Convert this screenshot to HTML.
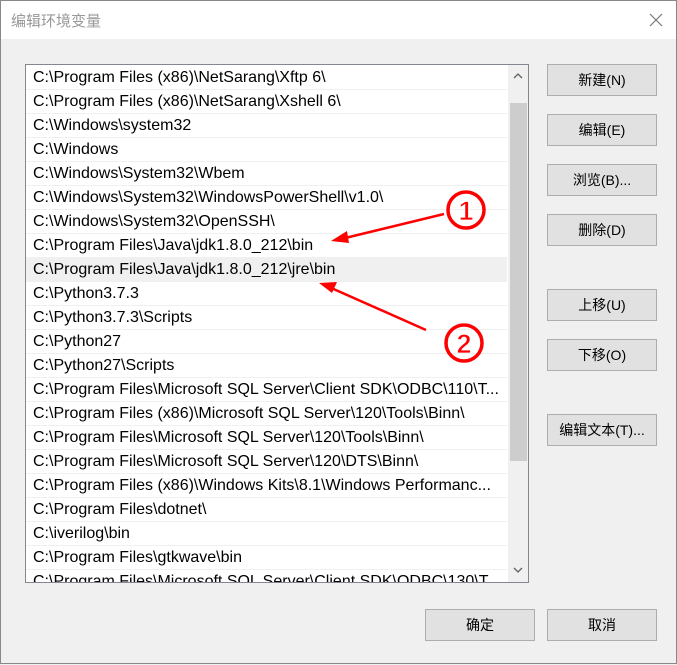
<!DOCTYPE html>
<html><head><meta charset="utf-8"><style>
body{margin:0;width:677px;height:664px;overflow:hidden;background:#f0f0f0;font-family:"Liberation Sans","Noto Sans CJK SC",sans-serif;}
.win{position:absolute;left:0;top:0;width:675px;height:662px;border:1px solid #888;background:#f0f0f0;}
.title{position:absolute;left:0;top:0;width:675px;height:38px;background:#fff;}
.title span{position:absolute;left:10px;top:9px;font-size:15px;color:#999;}
.list{position:absolute;left:24px;top:63px;width:502px;height:517px;border:1px solid #828790;background:#fff;overflow:hidden;}
.row{position:absolute;left:0;width:474px;height:23px;border-bottom:1px solid #f0f0f0;font-size:16px;line-height:24px;padding-left:7px;box-sizing:content-box;white-space:nowrap;color:#000;overflow:hidden;}
.sb{position:absolute;right:0;top:0;width:20px;height:517px;background:#f0f0f0;}
.thumb{position:absolute;left:2px;top:38px;width:17px;height:358px;background:#cdcdcd;}
.btn{position:absolute;width:108px;height:30px;border:1px solid #adadad;background:#e1e1e1;font-size:14px;line-height:30px;text-align:center;}
</style></head><body><div class="win">
<div class="title"><span>编辑环境变量</span>
<svg style="position:absolute;left:648px;top:12px" width="14" height="14"><path d="M1 1L13 13M13 1L1 13" stroke="#777" stroke-width="1.2"/></svg></div>
<div class="list">
<div class="row" style="top:1px">C:\Program Files (x86)\NetSarang\Xftp 6\</div>
<div class="row" style="top:25px">C:\Program Files (x86)\NetSarang\Xshell 6\</div>
<div class="row" style="top:49px">C:\Windows\system32</div>
<div class="row" style="top:73px">C:\Windows</div>
<div class="row" style="top:97px">C:\Windows\System32\Wbem</div>
<div class="row" style="top:121px">C:\Windows\System32\WindowsPowerShell\v1.0\</div>
<div class="row" style="top:145px">C:\Windows\System32\OpenSSH\</div>
<div class="row" style="top:169px">C:\Program Files\Java\jdk1.8.0_212\bin</div>
<div class="row" style="top:193px;background:#f0f0f0">C:\Program Files\Java\jdk1.8.0_212\jre\bin</div>
<div class="row" style="top:217px">C:\Python3.7.3</div>
<div class="row" style="top:241px">C:\Python3.7.3\Scripts</div>
<div class="row" style="top:265px">C:\Python27</div>
<div class="row" style="top:289px">C:\Python27\Scripts</div>
<div class="row" style="top:313px">C:\Program Files\Microsoft SQL Server\Client SDK\ODBC\110\T...</div>
<div class="row" style="top:337px">C:\Program Files (x86)\Microsoft SQL Server\120\Tools\Binn\</div>
<div class="row" style="top:361px">C:\Program Files\Microsoft SQL Server\120\Tools\Binn\</div>
<div class="row" style="top:385px">C:\Program Files\Microsoft SQL Server\120\DTS\Binn\</div>
<div class="row" style="top:409px">C:\Program Files (x86)\Windows Kits\8.1\Windows Performanc...</div>
<div class="row" style="top:433px">C:\Program Files\dotnet\</div>
<div class="row" style="top:457px">C:\iverilog\bin</div>
<div class="row" style="top:481px">C:\Program Files\gtkwave\bin</div>
<div class="row" style="top:505px">C:\Program Files\Microsoft SQL Server\Client SDK\ODBC\130\T...</div>
<div class="sb"><div class="thumb"></div>
<svg style="position:absolute;left:5px;top:8px" width="10" height="6"><path d="M1 5L5 1L9 5" stroke="#606060" fill="none" stroke-width="1.3"/></svg>
<svg style="position:absolute;left:5px;top:502px" width="10" height="6"><path d="M1 1L5 5L9 1" stroke="#606060" fill="none" stroke-width="1.3"/></svg></div>
</div>
<div class="btn" style="left:546px;top:63px">新建(N)</div>
<div class="btn" style="left:546px;top:113px">编辑(E)</div>
<div class="btn" style="left:546px;top:163px">浏览(B)...</div>
<div class="btn" style="left:546px;top:213px">删除(D)</div>
<div class="btn" style="left:546px;top:288px">上移(U)</div>
<div class="btn" style="left:546px;top:338px">下移(O)</div>
<div class="btn" style="left:546px;top:413px">编辑文本(T)...</div>
<div class="btn" style="left:424px;top:608px">确定</div>
<div class="btn" style="left:546px;top:608px">取消</div>
<svg style="position:absolute;left:0;top:0" width="677" height="664">
<line x1="443" y1="213" x2="340" y2="238" stroke="#f00" stroke-width="2.5"/>
<path d="M330 240L346 230L348 242z" fill="#f00"/>
<line x1="425" y1="329" x2="328" y2="286" stroke="#f00" stroke-width="2.5"/>
<path d="M318 282L336 281L331 292z" fill="#f00"/>
<circle cx="465" cy="209" r="18" fill="none" stroke="#f00" stroke-width="3.5"/>
<text x="465" y="219" font-size="27" font-weight="bold" fill="#f00" stroke="#fff" stroke-width="0.8" text-anchor="middle" font-family="Liberation Sans">1</text>
<circle cx="463" cy="342" r="18" fill="none" stroke="#f00" stroke-width="3.5"/>
<text x="463" y="352" font-size="27" font-weight="bold" fill="#f00" stroke="#fff" stroke-width="0.8" text-anchor="middle" font-family="Liberation Sans">2</text>
</svg>
</div></body></html>
